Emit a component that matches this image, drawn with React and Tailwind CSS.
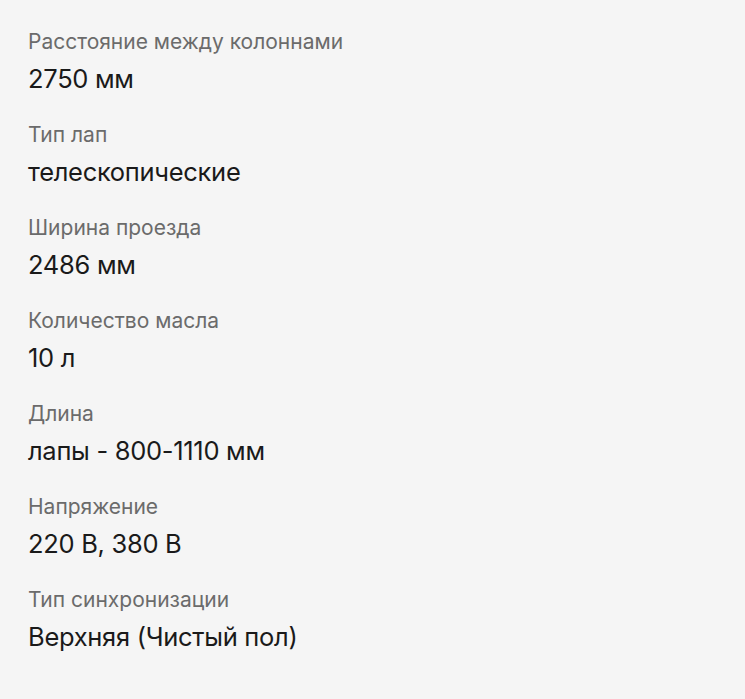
const specs = [
  { label: "Расстояние между колоннами", value: "2750 мм" },
  { label: "Тип лап", value: "телескопические" },
  { label: "Ширина проезда", value: "2486 мм" },
  { label: "Количество масла", value: "10 л" },
  { label: "Длина", value: "лапы - 800-1110 мм" },
  { label: "Напряжение", value: "220 В, 380 В" },
  { label: "Тип синхронизации", value: "Верхняя (Чистый пол)" },
];

export default function App() {
  return (
    <div className="w-[745px] h-[699px] bg-[#f5f5f5] px-7 pt-[28px] font-['Inter',sans-serif]">
      <div className="flex flex-col gap-[26px]">
        {specs.map((s, i) => (
          <div className="flex flex-col gap-[7px]" key={i}>
            <p className="text-[21px] leading-[28px] text-[#6b6b6b]">{s.label}</p>
            <p className="text-[25.5px] leading-[32px] text-[#1a1a1a] tracking-[-0.3px]">{s.value}</p>
          </div>
        ))}
      </div>
    </div>
  );
}
